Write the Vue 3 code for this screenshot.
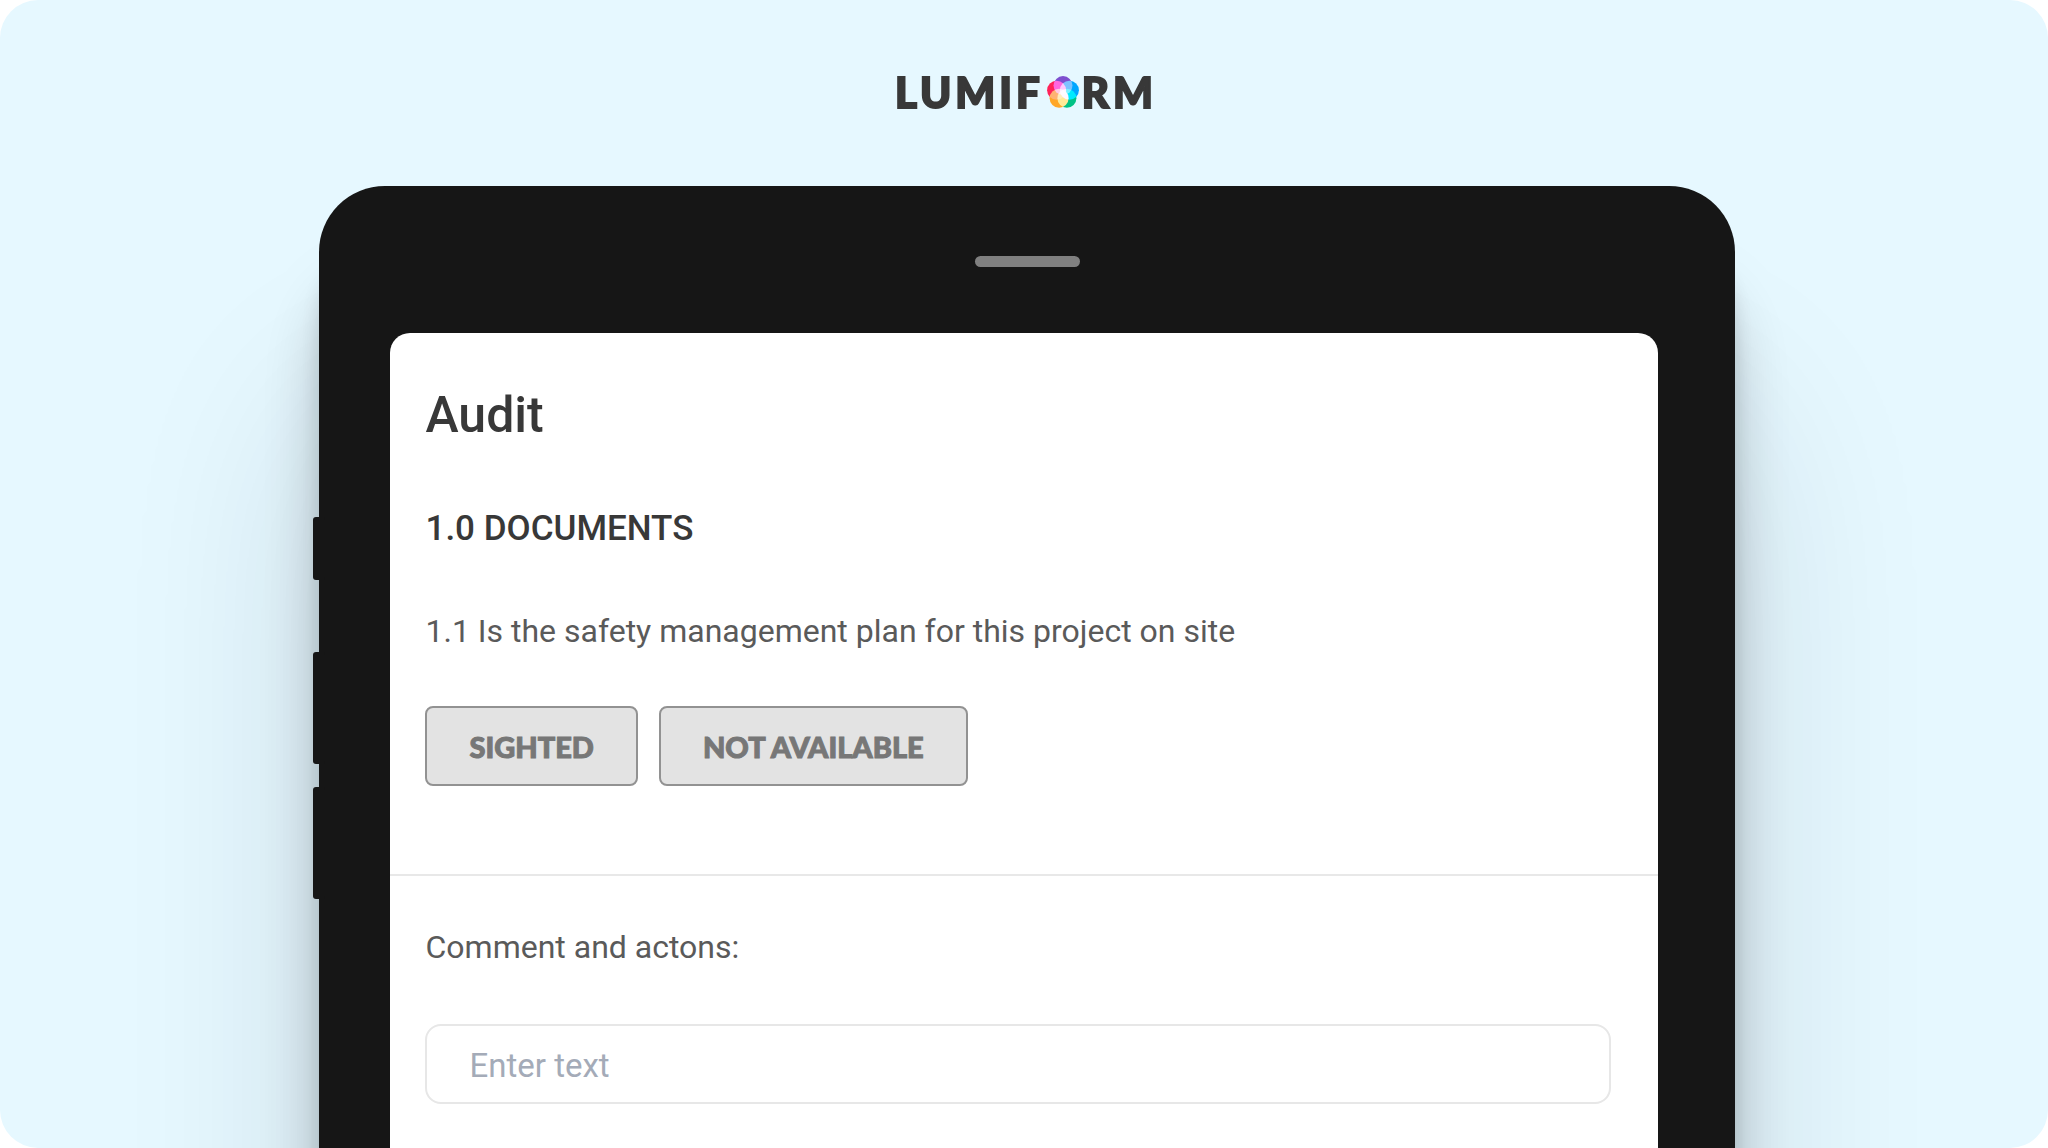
<script setup>
import { ref } from 'vue'

const answers = ['SIGHTED', 'NOT AVAILABLE']
const selected = ref('')
const comment = ref('')
</script>

<template>
  <div class="page">
    <header class="brand" aria-label="Lumiform">
      <span>LUMIF</span>
      <svg class="mark" viewBox="0 0 32 32" aria-hidden="true">
        <g class="petals">
          <circle cx="16" cy="9.6" r="9.5" fill="#7d4fcf" />
          <circle cx="22.4" cy="14.2" r="9.5" fill="#00a6ff" />
          <circle cx="19.9" cy="22.2" r="9.5" fill="#00c285" />
          <circle cx="12.1" cy="22.2" r="9.5" fill="#ffa726" />
          <circle cx="9.6" cy="14.2" r="9.5" fill="#ff2259" />
        </g>
      </svg>
      <span>RM</span>
    </header>

    <div class="tablet">
      <div class="keys" aria-hidden="true">
        <i class="key short"></i>
        <i class="key"></i>
        <i class="key"></i>
      </div>
      <div class="speaker"></div>
      <main class="screen">
        <section class="block question">
          <h1>Audit</h1>
          <h2>1.0 DOCUMENTS</h2>
          <p id="q1">1.1 Is the safety management plan for this project on site</p>
          <div class="answers" role="group" aria-labelledby="q1">
            <button
              v-for="answer in answers"
              :key="answer"
              type="button"
              :aria-pressed="selected === answer"
              @click="selected = answer"
            >{{ answer }}</button>
          </div>
        </section>
        <section class="block comments">
          <label for="comment">Comment and actons:</label>
          <input id="comment" v-model="comment" type="text" placeholder="Enter text" />
        </section>
      </main>
    </div>
  </div>
</template>

<style>
body {
  margin: 0;
  background: #fff;
}
</style>

<style scoped>
.page {
  box-sizing: border-box;
  display: flex;
  flex-direction: column;
  min-height: 100vh;
  padding-top: 68px;
  overflow: hidden;
  border-radius: 38px;
  background: #e6f8ff;
  font-family: Roboto, "Liberation Sans", sans-serif;
}

.brand {
  display: flex;
  justify-content: center;
  align-items: center;
  gap: 3px;
  height: 48px;
  padding-left: 4px;
  color: #383838;
  font-family: Lato, sans-serif;
  font-size: 42px;
  font-weight: 900;
  line-height: 48px;
  letter-spacing: 4px;
  -webkit-text-stroke: 2px #383838;
}

.mark {
  width: 32px;
  height: 32px;
}

.petals {
  isolation: isolate;
}

.petals circle {
  mix-blend-mode: screen;
}

.tablet {
  position: relative;
  display: flex;
  flex: 1;
  flex-direction: column;
  margin: 70px 15.3% -400px 15.6%;
  padding-top: 70px;
  border-radius: 66px 66px 0 0;
  background: #161616;
  box-shadow:
    0 220px 200px rgba(20, 30, 40, 0.14),
    0 100px 70px -10px rgba(20, 25, 25, 0.26),
    0 60px 30px -12px rgba(20, 25, 25, 0.3);
}

/* side keys protrude from the left edge of the case */
.keys {
  position: absolute;
  top: 331px;
  left: -6px;
  display: flex;
  flex-direction: column;
}

.key {
  width: 12px;
  height: 112px;
  margin-bottom: 23px;
  border-radius: 3px;
  background: #161616;
}

.key.short {
  height: 63px;
  margin-bottom: 72px;
}

.speaker {
  align-self: center;
  width: 105px;
  height: 11px;
  border-radius: 6px;
  background: #808080;
}

.screen {
  flex: 1;
  margin: 66px 77px 0 71px;
  padding-bottom: 444px;
  border-radius: 20px 20px 0 0;
  background: #fff;
}

.block {
  display: flex;
  flex-direction: column;
  padding: 0 47px 0 35px;
}

.question {
  padding-top: 52px;
  padding-bottom: 88px;
  border-bottom: 2px solid #e8e8e8;
}

.comments {
  padding-top: 51px;
}

h1,
h2,
p {
  margin: 0;
}

h1 {
  color: #383838;
  font-size: 50px;
  font-weight: 500;
  line-height: 60px;
}

h2 {
  margin-top: 60px;
  color: #383838;
  font-size: 35px;
  font-weight: 500;
  line-height: 48px;
}

p,
label {
  color: #5a5a5a;
  font-size: 32px;
  line-height: 40px;
}

p {
  margin-top: 58px;
}

.answers {
  display: flex;
  flex-wrap: wrap;
  gap: 21px;
  margin-top: 55px;
}

button {
  box-sizing: border-box;
  height: 80px;
  padding: 0 42px;
  border: 2px solid #929292;
  border-radius: 8px;
  background: #e3e3e3;
  color: #777;
  font-family: Lato, sans-serif;
  font-size: 29px;
  font-weight: 900;
  -webkit-text-stroke: 1px #777;
  cursor: pointer;
}

input {
  box-sizing: border-box;
  width: 100%;
  height: 80px;
  margin-top: 57px;
  padding: 2px 42px 0;
  border: 2px solid #e7e7e7;
  border-radius: 16px;
  background: #fff;
  color: #555;
  font-family: inherit;
  font-size: 33px;
}

input::placeholder {
  color: #a4abb8;
  opacity: 1;
}
</style>
